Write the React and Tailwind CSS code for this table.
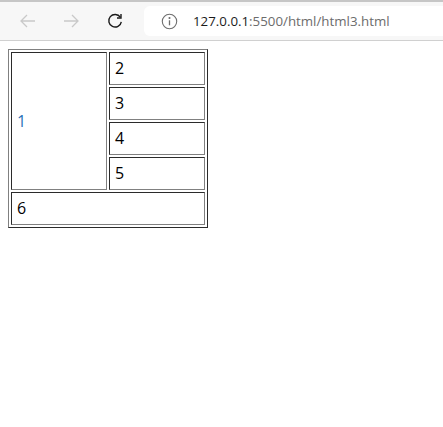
import React from "react";

// cell with inset-style border (dark top/left, gray bottom/right)
const Cell = ({ children, className = "", textClass = "text-black" }) => (
  <div
    className={`border border-t-[#2b2b2b] border-l-[#2b2b2b] border-b-[#808080] border-r-[#808080] px-[5px] flex items-center ${className}`}
  >
    <span className={textClass}>{children}</span>
  </div>
);

function Toolbar() {
  return (
    <div className="h-[41px] bg-[#f7f7f7] border-t-2 border-t-[#c6c6c6] border-b border-b-[#d0d0d0] flex items-center">
      <div className="w-[144px] flex items-center">
        {/* back */}
        <svg className="ml-[19px]" width="18" height="18" viewBox="0 0 18 18" fill="none" stroke="#c9c9c9" strokeWidth="1.3">
          <path d="M16 9H2M8 3L2 9l6 6" />
        </svg>
        {/* forward */}
        <svg className="ml-[25px]" width="18" height="18" viewBox="0 0 18 18" fill="none" stroke="#c9c9c9" strokeWidth="1.3">
          <path d="M2 9h14M10 3l6 6-6 6" />
        </svg>
        {/* reload */}
        <svg className="ml-[26px]" width="18" height="18" viewBox="0 0 18 18" fill="none" stroke="#1a1a1a" strokeWidth="1.4">
          <path d="M14.3 5.2A6.3 6.3 0 1 0 15.3 9.8" />
          <path d="M15 2v4h-4" />
        </svg>
      </div>
      <div className="flex-1 h-[30px] bg-white rounded-l-md flex items-center">
        <svg className="ml-[17px]" width="17" height="17" viewBox="0 0 17 17" fill="none" stroke="#6e6e6e" strokeWidth="1.1">
          <circle cx="8.5" cy="8.5" r="7.2" />
          <path d="M8.5 7.3v5" strokeWidth="1.3" />
          <circle cx="8.5" cy="5" r="0.5" fill="#6e6e6e" />
        </svg>
        <div className="ml-[15px] text-[13.3px] font-['Open_Sans',sans-serif]">
          <span className="text-[#1b1b1b]">127.0.0.1</span>
          <span className="text-[#6c6c6c]">:5500/html/html3.html</span>
        </div>
      </div>
    </div>
  );
}

export default function App() {
  return (
    <div className="w-[443px] h-[427px] bg-white font-['Open_Sans',sans-serif] text-[16px] leading-[21px]">
      <Toolbar />
      <div className="pt-[8px] pl-[8px]">
        <div className="w-[200px] border border-t-[#808080] border-l-[#808080] border-b-[#2b2b2b] border-r-[#2b2b2b] p-[2px] flex flex-col gap-[2px]">
          <div className="flex gap-[2px]">
            <Cell className="w-[96px] h-[138px]" textClass="text-[#2a72b8]">1</Cell>
            <div className="w-[96px] flex flex-col gap-[2px]">
              <Cell className="h-[33px]">2</Cell>
              <Cell className="h-[33px]">3</Cell>
              <Cell className="h-[33px]">4</Cell>
              <Cell className="h-[33px]">5</Cell>
            </div>
          </div>
          <Cell className="h-[33px]">6</Cell>
        </div>
      </div>
    </div>
  );
}
